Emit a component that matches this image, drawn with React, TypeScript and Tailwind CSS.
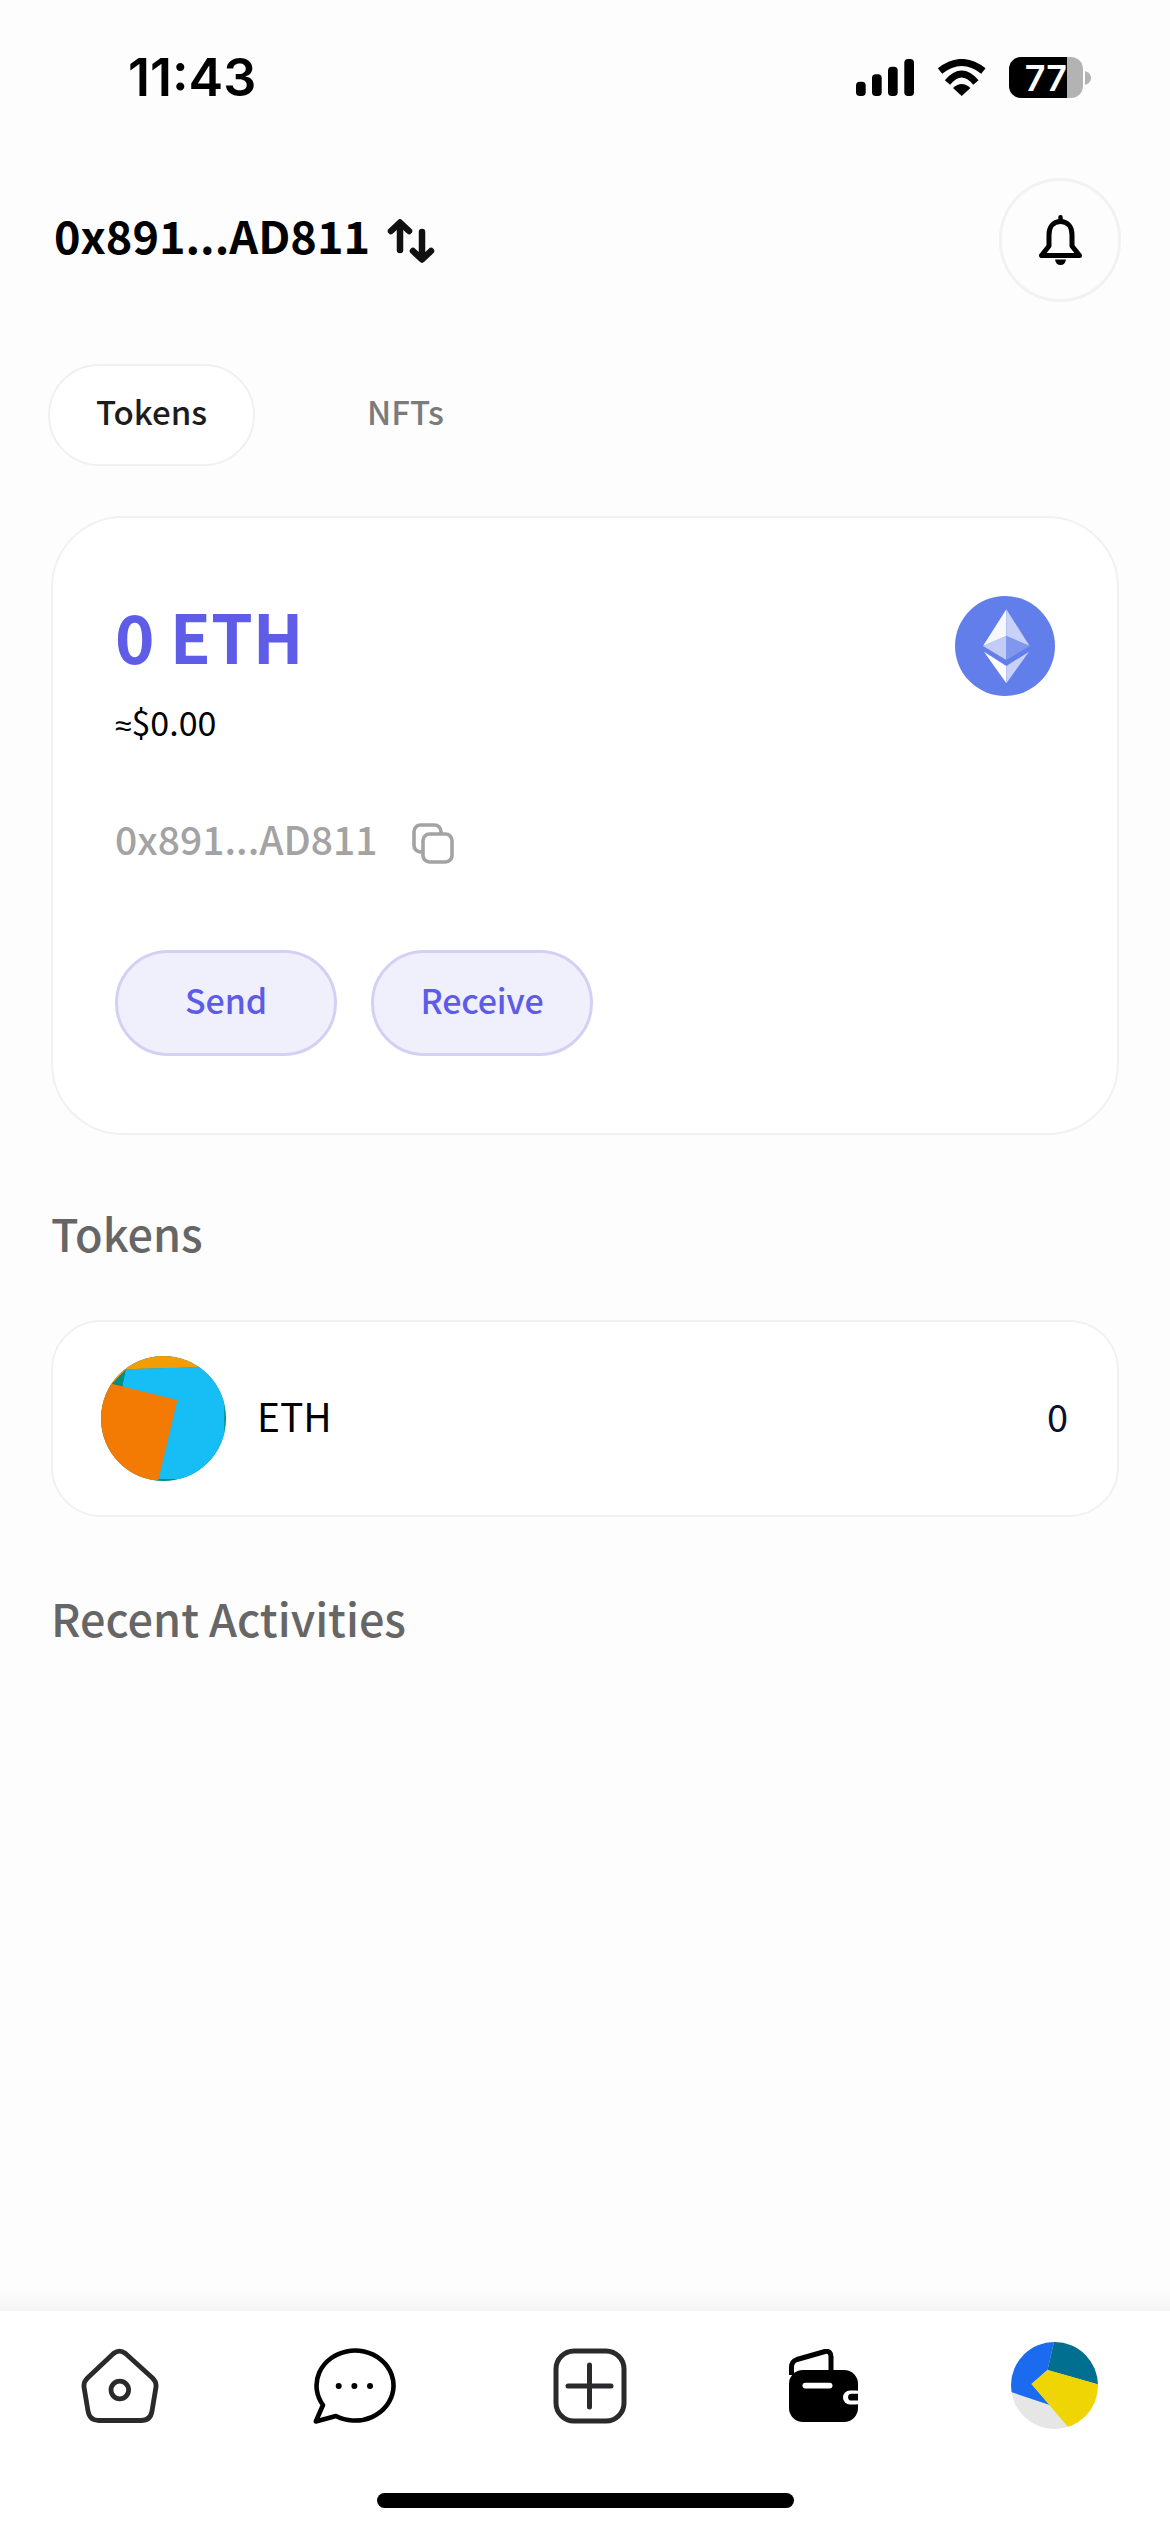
import React from "react";

const cjk = "font-['Noto_Sans_CJK_SC','Noto_Sans',sans-serif]";

function Signal() {
  return (
    <svg width="58" height="37" viewBox="0 0 58 37" className="block">
      <rect x="0" y="22.7" width="9.7" height="14.3" rx="3.8" fill="#000" />
      <rect x="16" y="15.3" width="9.7" height="21.7" rx="3.8" fill="#000" />
      <rect x="32" y="7.7" width="9.7" height="29.3" rx="3.8" fill="#000" />
      <rect x="48.3" y="0" width="9.7" height="37" rx="3.8" fill="#000" />
    </svg>
  );
}

function Wifi() {
  return (
    <svg width="49" height="37" viewBox="0 0 49 37" className="block">
      <path d="M3 12 Q24.7 -5 46.4 12" fill="none" stroke="#000" strokeWidth="7" />
      <path d="M10.5 23.5 Q24.7 6.5 38.9 23.5" fill="none" stroke="#000" strokeWidth="7" />
      <path d="M24.7 37 L16 29 Q24.7 21 33.4 29 Z" fill="#000" />
    </svg>
  );
}

function Battery() {
  return (
    <div className="flex items-center">
      <div className="flex h-[41px] w-[74px] overflow-hidden rounded-[12px]">
        <div className="flex h-full w-[58px] items-center justify-end bg-black font-['Inter',sans-serif] text-[36px] leading-none font-semibold text-white">
          77
        </div>
        <div className="h-full flex-1 bg-[#b3b3b3]" />
      </div>
      <svg width="8" height="14" viewBox="0 0 8 14" className="ml-[1px] block">
        <path d="M1 0 Q7 2 7 7 Q7 12 1 14 Z" fill="#b3b3b3" />
      </svg>
    </div>
  );
}

function Arrows() {
  return (
    <svg width="50" height="46" viewBox="0 0 50 46" className="block">
      <g fill="none" stroke="#111" strokeWidth="6.5" strokeLinecap="round" strokeLinejoin="round">
        <path d="M14 32 V5 M5 13 L14 4.5 L23 13" />
        <path d="M36 14 V41 M27 33 L36 41.5 L45 33" />
      </g>
    </svg>
  );
}

function Bell() {
  return (
    <svg width="43" height="50" viewBox="0 0 43 50" className="block">
      <rect x="19.3" y="0" width="4.4" height="8" rx="2" fill="#000" />
      <path
        d="M21.5 6.5 C14 6.5 10 12 10 20 V31 L2.5 40.5 H40.5 L33 31 V20 C33 12 29 6.5 21.5 6.5 Z"
        fill="none"
        stroke="#000"
        strokeWidth="5"
        strokeLinejoin="round"
      />
      <path d="M16 44.5 H27 Q26 50 21.5 50 Q17 50 16 44.5 Z" fill="#000" />
    </svg>
  );
}

function EthLogo() {
  return (
    <svg width="100" height="100" viewBox="0 0 300 300" className="block">
      <circle cx="150" cy="150" r="150" fill="#627eea" />
      <path d="M154 40 L84 150 L154 120 Z" fill="#ffffff" fillOpacity="0.95" />
      <path d="M154 40 L224 150 L154 120 Z" fill="#c8d2f8" />
      <path d="M154 120 L84 150 L154 192 Z" fill="#c1ccf7" />
      <path d="M154 120 L224 150 L154 192 Z" fill="#8197ee" />
      <path d="M87 167 L154 210 L154 262 Z" fill="#ffffff" />
      <path d="M222 167 L154 210 L154 262 Z" fill="#c8d2f8" />
    </svg>
  );
}

function CopyIcon() {
  return (
    <svg width="42" height="41" viewBox="0 0 42 41" className="block">
      <rect x="2" y="2" width="27" height="27" rx="6.5" fill="none" stroke="#a3a3a3" strokeWidth="3.6" />
      <rect x="11" y="11" width="29" height="28" rx="6.5" fill="#ffffff" stroke="#a3a3a3" strokeWidth="3.6" />
    </svg>
  );
}

function TokenAvatar() {
  return (
    <svg width="125" height="125" viewBox="63 80 375 375" className="block">
      <defs>
        <clipPath id="tok">
          <circle cx="250.5" cy="267.5" r="187.5" />
        </clipPath>
      </defs>
      <g clipPath="url(#tok)">
        <rect x="60" y="70" width="390" height="390" fill="#008f7a" />
        <path d="M60 70 H450 V112 L138 120 L60 200 Z" fill="#f29d05" />
        <path d="M128 168 L138 120 L355 113 L450 113 L433 230 L433 300 L470 449 L235 449 Z" fill="#17bdf5" />
        <path d="M95 163 L292 212 L235 452 L60 460 L60 150 Z" fill="#f37a03" />
      </g>
    </svg>
  );
}

function HomeIcon() {
  return (
    <svg width="78" height="76" viewBox="0 0 78 76" className="block">
      <path
        d="M32.5 5.5 Q38.5 0.8 44.5 5.5 L71.5 30 Q75.6 34 75 39 L71 63 Q69.5 72.5 60 72.5 L18 72.5 Q8.5 72.5 7 63 L3 39 Q2.4 34 6.5 30 Z"
        fill="none"
        stroke="#2a2a2c"
        strokeWidth="4.8"
        strokeLinejoin="round"
      />
      <circle cx="38.8" cy="42" r="8.8" fill="none" stroke="#2a2a2c" strokeWidth="4.8" />
    </svg>
  );
}

function ChatIcon() {
  return (
    <svg width="84" height="76" viewBox="0 0 84 76" className="block">
      <path
        d="M10 57 A38.5 35 0 1 1 23 68 L2.8 73.5 Z"
        fill="none"
        stroke="#000"
        strokeWidth="4.6"
        strokeLinejoin="round"
      />
      <circle cx="25.7" cy="38" r="3" fill="#000" />
      <circle cx="41.4" cy="38" r="3" fill="#000" />
      <circle cx="57" cy="38" r="3" fill="#000" />
    </svg>
  );
}

function PlusIcon() {
  return (
    <svg width="74" height="76" viewBox="0 0 74 76" className="block">
      <rect x="3" y="3" width="68" height="70" rx="18" fill="none" stroke="#2a2a2c" strokeWidth="5" />
      <path d="M15 38 H58 M36.5 17 V59" fill="none" stroke="#2a2a2c" strokeWidth="5" strokeLinecap="round" />
    </svg>
  );
}

function WalletIcon() {
  return (
    <svg width="70" height="74" viewBox="0 0 70 74" className="block">
      <path
        d="M2.5 26 V18 Q2.5 12.5 8 10.5 L36 2.5 Q42 1.5 42 8 V24"
        fill="none"
        stroke="#000"
        strokeWidth="5"
        strokeLinejoin="round"
      />
      <rect x="0" y="21" width="69" height="52" rx="14" fill="#000" />
      <rect x="13.5" y="33.7" width="30" height="5.8" rx="2.9" fill="#fff" />
      <rect x="54" y="41.5" width="20" height="14" rx="7" fill="#fff" />
      <path d="M69 44.8 H62.5 A3.4 3.4 0 0 0 62.5 51.6 H69 Z" fill="#000" />
      <rect x="69" y="38" width="3" height="20" fill="#fff" />
    </svg>
  );
}

function NavAvatar() {
  return (
    <svg width="87" height="87" viewBox="0 0 87 87" className="block">
      <defs>
        <clipPath id="nav">
          <circle cx="43.5" cy="43.5" r="43.5" />
        </clipPath>
      </defs>
      <g clipPath="url(#nav)">
        <rect x="0" y="0" width="87" height="87" fill="#e6e6e6" />
        <path d="M43 0 L36.5 28 L20.5 42 L38.7 63 L0 50 L-5 -5 Z" fill="#1a6bf0" />
        <path d="M43 0 L36.5 28 L87 42.5 L90 -5 Z" fill="#006f90" />
        <path d="M36.5 28 L20.5 42 L57 85 L92 80 L90 43 Z" fill="#f0d505" />
      </g>
    </svg>
  );
}

export default function App() {
  return (
    <div className={`flex h-[2532px] w-[1170px] flex-col overflow-hidden bg-[#fdfdfd] ${cjk}`}>
      <div className="mt-[57px] flex h-[41px] items-center justify-between pl-[128px] pr-[78px]">
        <div className="font-['Inter',sans-serif] text-[52px] leading-none font-semibold text-black">11:43</div>
        <div className="flex items-center">
          <Signal />
          <div className="ml-[23px]">
            <Wifi />
          </div>
          <div className="ml-[23px]">
            <Battery />
          </div>
        </div>
      </div>

      <div className="mt-[80px] flex h-[124px] items-center justify-between pl-[54px] pr-[49px]">
        <div className="flex items-center">
          <span className="pb-[10px] text-[45px] leading-[60px] font-bold text-black">0x891...AD811</span>
          <div className="ml-[16px] mt-[2px]">
            <Arrows />
          </div>
        </div>
        <div className="flex h-[124px] w-[122px] items-center justify-center rounded-full border-[3px] border-[#f2f2f2]">
          <Bell />
        </div>
      </div>

      <div className="mt-[62px] flex h-[102px] items-center pl-[48px]">
        <div className="flex h-[102px] w-[207px] items-center justify-center rounded-[51px] border-2 border-[#f0f0f0] bg-white pb-[6px] text-[33px] font-medium text-[#1c1c1c]">
          Tokens
        </div>
        <div className="ml-[112px] pb-[6px] text-[33px] font-medium text-[#7b7b7b]">NFTs</div>
      </div>

      <div className="mx-[51px] mt-[50px] flex h-[619px] flex-col rounded-[72px] border-2 border-[#f1f1f1] bg-white px-[62px] pt-[78px]">
        <div className="flex items-start justify-between">
          <div>
            <div className="pb-[6px] text-[67px] leading-[78px] font-bold text-[#5f5de8]">0 ETH</div>
            <div className="mt-[20px] flex h-[44px] items-baseline text-[34px] leading-[44px] text-black">
              <span className="font-['Noto_Sans',sans-serif] text-[30px]">≈</span>
              <span>$0.00</span>
            </div>
          </div>
          <EthLogo />
        </div>
        <div className="mt-[76px] flex h-[44px] items-center">
          <span className="pb-[8px] text-[39px] leading-[44px] font-medium text-[#a3a3a3]">0x891...AD811</span>
          <div className="ml-[34px] mt-[3px]">
            <CopyIcon />
          </div>
        </div>
        <div className="mt-[86px] flex gap-[34px]">
          <div className="flex h-[106px] w-[222px] items-center justify-center rounded-[53px] border-[3px] border-[#d2d1f4] bg-[#f0f0fd] pb-[7px] text-[34px] font-medium tracking-[-0.2px] text-[#5d5ce6]">
            Send
          </div>
          <div className="flex h-[106px] w-[222px] items-center justify-center rounded-[53px] border-[3px] border-[#d2d1f4] bg-[#f0f0fd] pb-[7px] text-[34px] font-medium tracking-[-0.2px] text-[#5d5ce6]">
            Receive
          </div>
        </div>
      </div>

      <div className="ml-[51px] mt-[71px] pb-[6px] text-[45px] leading-[54px] font-medium text-[#666666]">Tokens</div>

      <div className="mx-[51px] mt-[54px] flex h-[197px] items-center rounded-[50px] border-2 border-[#f1f1f1] bg-white pl-[48px] pr-[49px]">
        <TokenAvatar />
        <div className="ml-[31px] flex-1 pb-[6px] text-[39px] text-black">ETH</div>
        <div className="pb-[6px] text-[38px] text-[#0b1030]">0</div>
      </div>

      <div className="ml-[51px] mt-[74px] pb-[6px] text-[45px] leading-[54px] font-medium text-[#666666]">Recent Activities</div>

      <div className="flex-1" />

      <div className="h-[21px] bg-gradient-to-b from-[#fdfdfd] to-[#f4f4f4]" />
      <div className="h-[221px] bg-white pt-[31px]">
        <div className="flex h-[87px] items-center pl-[81px]">
          <HomeIcon />
          <div className="ml-[154px]">
            <ChatIcon />
          </div>
          <div className="ml-[156px]">
            <PlusIcon />
          </div>
          <div className="ml-[162px]">
            <WalletIcon />
          </div>
          <div className="ml-[152px]">
            <NavAvatar />
          </div>
        </div>
        <div className="ml-[377px] mt-[64px] h-[15px] w-[417px] rounded-full bg-black" />
      </div>
    </div>
  );
}
